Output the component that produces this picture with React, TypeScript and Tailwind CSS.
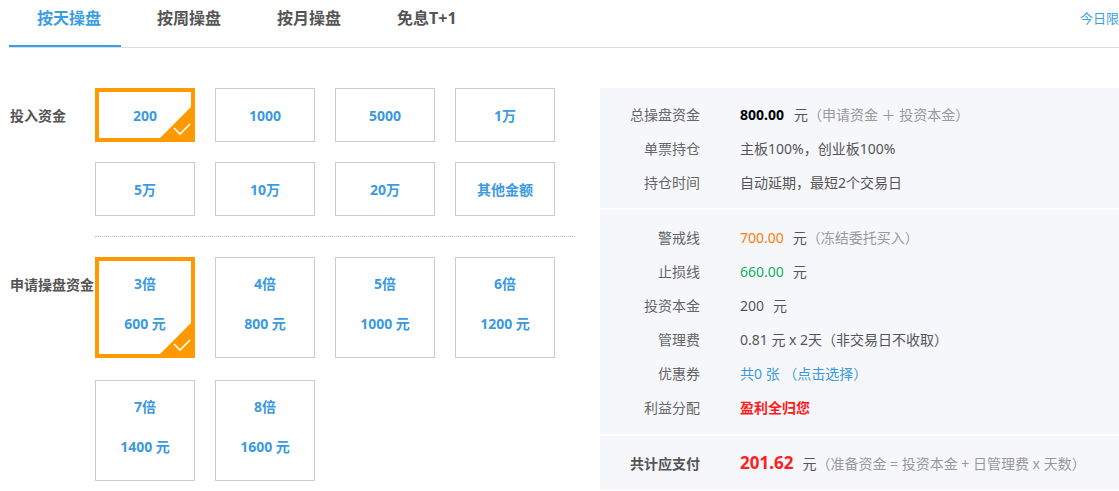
import React from 'react';

const tabs = ['按天操盘', '按周操盘', '按月操盘', '免息T+1'];
const amounts = ['200', '1000', '5000', '1万', '5万', '10万', '20万', '其他金额'];
const multiples = [
  { x: '3倍', v: '600 元' },
  { x: '4倍', v: '800 元' },
  { x: '5倍', v: '1000 元' },
  { x: '6倍', v: '1200 元' },
  { x: '7倍', v: '1400 元' },
  { x: '8倍', v: '1600 元' },
];

function Corner() {
  return (
    <svg className="absolute right-0 bottom-0" width="31" height="31" viewBox="0 0 31 31">
      <polygon points="31,0 31,31 0,31" fill="#ff9900" />
      <polyline points="14,21 20,27 30,17" fill="none" stroke="#fff" strokeWidth="1.6" />
    </svg>
  );
}

function Row({ label, children, bold }: { label: string; children: React.ReactNode; bold?: boolean }) {
  return (
    <div className="flex items-center h-[34px]">
      <div className={`w-[100px] text-right text-[14px] ${bold ? 'font-bold text-[#555]' : 'text-[#666]'}`}>{label}</div>
      <div className="ml-[40px] text-[14px] text-[#555] whitespace-nowrap">{children}</div>
    </div>
  );
}

export default function App() {
  return (
    <div className="w-full h-[491px] overflow-hidden bg-white font-['Noto_Sans','Noto_Sans_CJK_SC',sans-serif]">
      {/* tabs */}
      <div className="ml-[9px] flex h-[48px] border-b border-[#ddd]">
        {tabs.map((t, i) => (
          <div
            key={t}
            className={`h-[47px] w-[112px] mr-2 pl-[28px] pt-[8px] text-[16px] leading-[21px] font-bold whitespace-nowrap ${
              i === 0 ? 'text-[#3a9ee3] border-b-2 border-[#3a9ee3]' : 'text-[#555]'
            }`}
          >
            {t}
          </div>
        ))}
        <div className="ml-auto w-[39px] overflow-hidden whitespace-nowrap pt-[9px] text-[13px] leading-[18px] text-[#3a9ee3]">
          今日限额已满
        </div>
      </div>

      <div className="flex pt-[40px]">
        {/* left */}
        <div className="w-[600px] shrink-0 pl-[10px]">
          <div className="flex">
            <div className="w-[85px] h-[54px] flex items-center text-[14px] font-bold text-[#555]">投入资金</div>
            <div className="grid grid-cols-[repeat(4,100px)] gap-x-[20px] gap-y-[20px]">
              {amounts.map((a, i) => (
                <div
                  key={a}
                  className={`relative h-[54px] flex items-center justify-center text-[14px] font-bold text-[#3b9ae0] ${
                    i === 0 ? 'border-4 border-[#ff9900]' : 'border border-[#ccc]'
                  }`}
                >
                  {a}
                  {i === 0 && <Corner />}
                </div>
              ))}
            </div>
          </div>

          <div className="ml-[85px] mt-[20px] w-[480px] border-t border-dotted border-[#bbb]" />

          <div className="flex mt-[20px]">
            <div className="w-[85px] h-[54px] flex items-center text-[14px] font-bold text-[#555] whitespace-nowrap">申请操盘资金</div>
            <div className="grid grid-cols-[repeat(4,100px)] gap-x-[20px] gap-y-[22px]">
              {multiples.map((m, i) => (
                <div
                  key={m.x}
                  className={`relative h-[101px] flex flex-col items-center gap-[20px] text-[14px] leading-[20px] font-bold text-[#3b9ae0] ${
                    i === 0 ? 'border-4 border-[#ff9900] pt-[13px]' : 'border border-[#ccc] pt-[16px]'
                  }`}
                >
                  <span>{m.x}</span>
                  <span>{m.v}</span>
                  {i === 0 && <Corner />}
                </div>
              ))}
            </div>
          </div>
        </div>

        {/* right panel */}
        <div className="flex-1 bg-[#f5f7fb]">
          <div className="py-[9px] border-b-2 border-white">
            <Row label="总操盘资金">
              <span className="font-bold text-black">800.00</span>
              <span className="ml-[10px]">元</span>
              <span className="text-[#999]">（申请资金 ＋ 投资本金）</span>
            </Row>
            <Row label="单票持仓">主板100%，创业板100%</Row>
            <Row label="持仓时间">自动延期，最短2个交易日</Row>
          </div>
          <div className="py-[10px] border-b-2 border-white">
            <Row label="警戒线">
              <span className="text-[#ff7a00]">700.00</span>
              <span className="ml-[9px]">元</span>
              <span className="text-[#999]">（冻结委托买入）</span>
            </Row>
            <Row label="止损线">
              <span className="text-[#12b05c]">660.00</span>
              <span className="ml-[9px]">元</span>
            </Row>
            <Row label="投资本金">
              200<span className="ml-[9px]">元</span>
            </Row>
            <Row label="管理费">0.81 元 x 2天（非交易日不收取）</Row>
            <Row label="优惠券">
              <span className="text-[#3b9ae0]">共0 张 （点击选择）</span>
            </Row>
            <Row label="利益分配">
              <span className="font-bold text-[#ff1a1a]">盈利全归您</span>
            </Row>
          </div>
          <div className="py-[10px]">
            <Row label="共计应支付" bold>
              <span className="text-[17px] font-bold text-[#ff2020]">201.62</span>
              <span className="ml-[9px]">元</span>
              <span className="text-[#999]">（准备资金 = 投资本金 + 日管理费 x 天数）</span>
            </Row>
          </div>
        </div>
      </div>
    </div>
  );
}
